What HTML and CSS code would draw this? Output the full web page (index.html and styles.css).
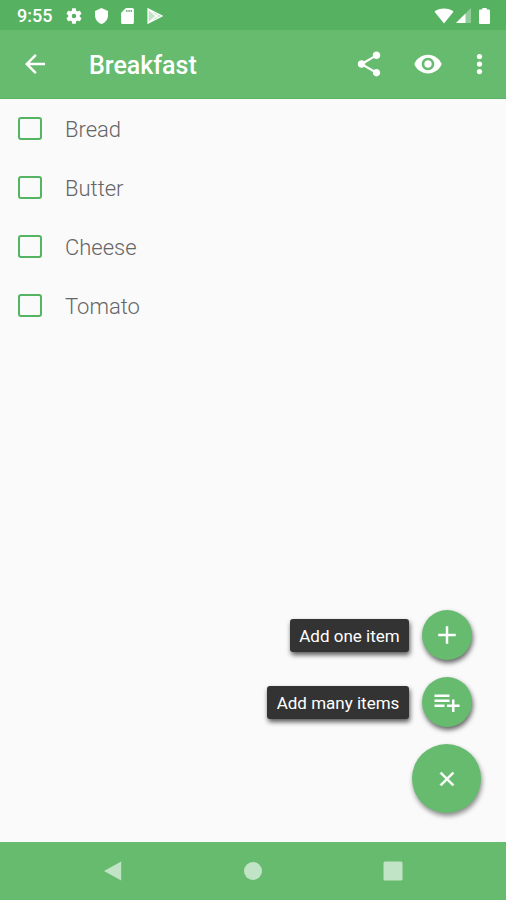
FILE: index.html
```html
<!DOCTYPE html>
<html lang="en">
<head>
    <meta charset="UTF-8">
    <meta name="viewport" content="width=device-width, initial-scale=1.0">
    <title>Breakfast</title>
    <link rel="stylesheet" href="styles.css">
</head>
<body>
    <div class="screen">
        <div class="status-bar">
            <span class="time">9:55</span>
            <div class="status-left">
                <svg class="gear" viewBox="2 2 20 20"><path d="M19.14 12.94c.04-.3.06-.61.06-.94 0-.32-.02-.64-.07-.94l2.03-1.58a.49.49 0 0 0 .12-.61l-1.92-3.32a.488.488 0 0 0-.59-.22l-2.39.96c-.5-.38-1.03-.7-1.62-.94l-.36-2.54a.484.484 0 0 0-.48-.41h-3.84c-.24 0-.43.17-.47.41l-.36 2.54c-.59.24-1.13.57-1.62.94l-2.39-.96c-.22-.08-.47 0-.59.22L2.74 8.87c-.12.21-.08.47.12.61l2.03 1.58c-.05.3-.09.63-.09.94s.02.64.07.94l-2.03 1.58a.49.49 0 0 0-.12.61l1.92 3.32c.12.22.37.29.59.22l2.39-.96c.5.38 1.03.7 1.62.94l.36 2.54c.05.24.24.41.48.41h3.84c.24 0 .44-.17.47-.41l.36-2.54c.59-.24 1.13-.56 1.62-.94l2.39.96c.22.08.47 0 .59-.22l1.92-3.32c.12-.22.07-.47-.12-.61l-2.01-1.58zM12 14.800a2.800 2.800 0 1 1 0-5.600 2.800 2.800 0 0 1 0 5.600z"/></svg>
                <svg class="shield" viewBox="3 1 18 22"><path d="M12 1L3 5v6c0 5.55 3.84 10.74 9 12 5.16-1.26 9-6.45 9-12V5l-9-4z"/></svg>
                <svg class="sd" viewBox="4 2 16 20"><path d="M18 2h-8L4 8v12c0 1.1.9 2 2 2h12c1.1 0 2-.9 2-2V4c0-1.1-.9-2-2-2zM12 7h-1.6V4.500H12V7zm2.800 0h-1.600V4.500h1.600V7zm2.800 0H16V4.500h1.600V7z"/></svg>
                <svg class="play" viewBox="0 0 16 16"><path class="play-face" d="M1 .8L15.300 8 1 15.200z"/><path class="play-line" d="M1 .8v14.400L15.300 8zM1 .8L11.500 10M1 15.200L11.500 6"/></svg>
            </div>
            <div class="status-right">
                <svg class="wifi" viewBox="0 0 20 16"><path d="M10 15.500L.5 3.700C3 1.700 6.300.5 10 .5s7 1.200 9.500 3.200z"/></svg>
                <svg class="signal" viewBox="0 0 15 15"><path class="dim" d="M15 0v15H0z"/><path d="M9.500 5.500V15H0z"/></svg>
                <svg class="battery" viewBox="7 2 10 20" preserveAspectRatio="none"><path d="M15.670 4H14V2h-4v2H8.330C7.600 4 7 4.600 7 5.330v15.330C7 21.400 7.600 22 8.330 22h7.330c.74 0 1.340-.6 1.340-1.330V5.330C17 4.600 16.400 4 15.670 4z"/></svg>
            </div>
        </div>

        <div class="toolbar">
            <svg class="icon" viewBox="0 0 24 24"><path d="M20 11H7.830l5.590-5.590L12 4l-8 8 8 8 1.410-1.410L7.830 13H20v-2z"/></svg>
            <h1>Breakfast</h1>
            <div class="actions">
                <svg class="icon" viewBox="0 0 24 24"><path d="M18 16.080c-.76 0-1.440.3-1.960.77L8.910 12.700c.05-.23.090-.46.090-.7s-.04-.47-.09-.7l7.050-4.110c.54.5 1.250.81 2.040.81 1.660 0 3-1.340 3-3s-1.340-3-3-3-3 1.340-3 3c0 .24.04.47.09.7L8.040 9.810C7.500 9.310 6.790 9 6 9c-1.660 0-3 1.340-3 3s1.340 3 3 3c.79 0 1.500-.31 2.040-.81l7.120 4.160c-.05.21-.08.43-.08.65 0 1.610 1.310 2.920 2.920 2.920s2.920-1.310 2.920-2.920-1.310-2.920-2.920-2.920z"/></svg>
                <svg class="icon" viewBox="0 0 24 24"><path d="M12 4.500C7 4.500 2.730 7.610 1 12c1.730 4.390 6 7.500 11 7.500s9.270-3.110 11-7.500c-1.730-4.390-6-7.500-11-7.500zM12 17c-2.760 0-5-2.240-5-5s2.240-5 5-5 5 2.240 5 5-2.240 5-5 5zm0-8c-1.660 0-3 1.340-3 3s1.340 3 3 3 3-1.340 3-3-1.340-3-3-3z"/></svg>
                <svg class="icon more" viewBox="6 0 12 24"><circle cx="12" cy="6" r="2.100"/><circle cx="12" cy="12" r="2.100"/><circle cx="12" cy="18" r="2.100"/></svg>
            </div>
        </div>

        <div class="content">
            <ul class="list">
                <li><span class="checkbox"></span><span class="name">Bread</span></li>
                <li><span class="checkbox"></span><span class="name">Butter</span></li>
                <li><span class="checkbox"></span><span class="name">Cheese</span></li>
                <li><span class="checkbox"></span><span class="name">Tomato</span></li>
            </ul>

            <div class="fab-menu">
                <div class="fab-row">
                    <span class="label label-one">Add one item</span>
                    <button class="fab mini"><svg class="icon" viewBox="0 0 24 24"><path d="M19 13h-6v6h-2v-6H5v-2h6V5h2v6h6v2z"/></svg></button>
                </div>
                <div class="fab-row">
                    <span class="label label-many">Add many items</span>
                    <button class="fab mini"><svg class="icon" viewBox="0 0 24 24"><path d="M14 10H2v2h12v-2zm0-4H2v2h12V6zm4 8v-4h-2v4h-4v2h4v4h2v-4h4v-2h-4zM2 16h8v-2H2v2z"/></svg></button>
                </div>
                <button class="fab main"><svg class="close" viewBox="0 0 24 24"><path d="M19 6.410L17.590 5 12 10.590 6.410 5 5 6.410 10.590 12 5 17.590 6.410 19 12 13.410 17.590 19 19 17.590 13.410 12z"/></svg></button>
            </div>
        </div>

        <div class="nav-bar">
            <svg viewBox="0 0 20 20"><path d="M18.200.6v18.800L1 10z"/></svg>
            <svg viewBox="0 0 20 20"><circle cx="10" cy="10" r="9"/></svg>
            <svg viewBox="0 0 20 20"><rect x=".5" y=".5" width="19" height="19" rx="1.500"/></svg>
        </div>
    </div>
</body>
</html>
```
FILE: styles.css
```css
* {
    box-sizing: border-box;
}
body {
    margin: 0;
    font-family: Roboto, "Liberation Sans", sans-serif;
    background-color: #fafafa;
}
svg {
    display: block;
    fill: white;
    flex: none;
}
.screen {
    display: flex;
    flex-direction: column;
    width: 506px;
    height: 900px;
    overflow: hidden;
}
.status-bar {
    display: flex;
    align-items: center;
    height: 30px;
    padding: 1px 16px 0 17px;
    background-color: #56b261;
    color: white;
}
.time {
    width: 49px;
    font-size: 18px;
    font-weight: 500;
    line-height: 30px;
}
.status-left {
    display: flex;
    align-items: center;
    gap: 13px;
}
.gear {
    width: 16px;
    height: 16px;
}
.shield {
    width: 13px;
    height: 16px;
}
.sd {
    width: 13px;
    height: 16px;
}
.play {
    width: 16px;
    height: 16px;
}
.play-face {
    fill: rgba(255, 255, 255, 0.65);
}
.play-line {
    fill: none;
    stroke: white;
    stroke-width: 1.2;
}
.status-right {
    display: flex;
    align-items: center;
    margin-left: auto;
}
.wifi {
    width: 20px;
    height: 16px;
    margin-right: 2px;
}
.signal {
    width: 15px;
    height: 15px;
    margin-right: 8px;
}
.dim {
    fill: rgba(255, 255, 255, 0.35);
}
.battery {
    width: 11px;
    height: 16px;
}
.toolbar {
    display: flex;
    align-items: center;
    height: 69px;
    padding: 0 19px 0 20px;
    background-color: #66bb6f;
    border-bottom: 1px solid #58b463;
}
.toolbar h1 {
    margin: 4px 0 0 39px;
    color: white;
    font-size: 25px;
    font-weight: 500;
    line-height: 30px;
}
.icon {
    width: 30px;
    height: 30px;
}
.actions {
    display: flex;
    gap: 29px;
    margin-left: auto;
}
.more {
    width: 15px;
}
.content {
    display: flex;
    flex: 1;
    flex-direction: column;
    justify-content: space-between;
    background-color: #fafafa;
}
.list {
    margin: 0;
    padding: 0 0 0 18px;
    list-style: none;
}
.list li {
    display: flex;
    align-items: center;
    height: 59px;
    color: #666;
    font-size: 22px;
    font-weight: 300;
}
.checkbox {
    width: 24px;
    height: 23px;
    margin-right: 23px;
    border: 2px solid #55b461;
    border-radius: 3px;
}
.name {
    padding-top: 2px;
}
.fab-menu {
    display: flex;
    flex-direction: column;
    align-items: flex-end;
    gap: 17px;
    padding: 0 25px 29px 0;
}
.fab-row {
    display: flex;
    align-items: center;
    gap: 13px;
    padding-right: 9px;
}
.label {
    height: 33px;
    border-radius: 3px;
    background-color: #333;
    box-shadow: 1px 3px 5px rgba(0, 0, 0, 0.65);
    color: white;
    font-size: 17px;
    line-height: 34px;
    text-align: center;
    white-space: nowrap;
}
.label-one {
    width: 119px;
}
.label-many {
    width: 142px;
}
.fab {
    display: flex;
    align-items: center;
    justify-content: center;
    padding: 0;
    border: none;
    border-radius: 50%;
    background-color: #66bb6f;
}
.mini {
    width: 50px;
    height: 50px;
    box-shadow: 1px 3px 5px rgba(0, 0, 0, 0.6);
}
.main {
    width: 69px;
    height: 69px;
    box-shadow: 1px 3px 5px rgba(0, 0, 0, 0.45);
}
.close {
    width: 24px;
    height: 24px;
    stroke: white;
    stroke-width: 0.5;
}
.nav-bar {
    display: flex;
    justify-content: space-between;
    align-items: center;
    height: 58px;
    padding: 0 103px;
    background-color: #66bb6f;
}
.nav-bar svg {
    width: 20px;
    height: 20px;
    fill: #c2e4c6;
}
```
